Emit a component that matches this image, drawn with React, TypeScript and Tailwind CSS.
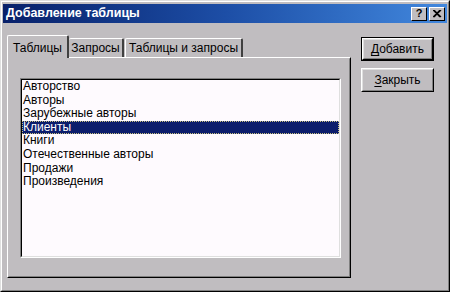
import React from "react";

const items = [
  "Авторство",
  "Авторы",
  "Зарубежные авторы",
  "Клиенты",
  "Книги",
  "Отечественные авторы",
  "Продажи",
  "Произведения",
];

const TitleButton: React.FC<{ children: React.ReactNode }> = ({ children }) => (
  <div className="w-[16px] h-[14px] bg-[#c0bdc0] border border-t-white border-l-white border-r-black border-b-black flex items-center justify-center text-black text-[11px] font-bold leading-none">
    {children}
  </div>
);

const DialogButton: React.FC<{ label: string; hot: string; isDefault?: boolean }> = ({ label, hot, isDefault }) => (
  <div className={`w-[73px] h-[24px] ${isDefault ? "border border-black" : ""}`}>
    <div className="w-full h-full border border-t-white border-l-white border-r-black border-b-black">
      <div className="w-full h-full border border-t-[#dfdfdf] border-l-[#dfdfdf] border-r-[#808080] border-b-[#808080] flex items-center justify-center text-[12px] text-black">
        <span className="underline underline-offset-2">{hot}</span>
        {label.slice(hot.length)}
      </div>
    </div>
  </div>
);

export default function App() {
  return (
    <div className="w-[450px] h-[292px] bg-[#c0bdc0] border border-t-[#dfdfdf] border-l-[#dfdfdf] border-r-black border-b-black font-['Liberation_Sans',sans-serif]">
      <div className="w-full h-full border border-t-white border-l-white border-r-[#808080] border-b-[#808080] p-[1px] pt-[2px]">
        <div className="h-[19px] bg-gradient-to-r from-[#08206a] via-[#1d4ea6] to-[#4288de] flex items-center justify-between pl-[3px] pr-[2px]">
          <span className="text-white font-bold text-[12.5px]">Добавление таблицы</span>
          <div className="flex gap-[2px]">
            <TitleButton>?</TitleButton>
            <TitleButton>
              <svg width="9" height="8" viewBox="0 0 9 8">
                <path d="M1 0 L8 7 M0 0 L7 7 M8 0 L1 7 M7 0 L0 7" stroke="black" strokeWidth="1.2" />
              </svg>
            </TitleButton>
          </div>
        </div>

        <div className="flex pl-[4px] pt-[12px] gap-[10px]">
          <div className="w-[344px]">
            <div className="flex items-end h-[22px] text-[12px] text-black">
              <div className="relative z-10 h-[23px] -mb-[1px] w-[62px] bg-[#c0bdc0] border-l border-t border-white border-r-2 border-r-[#404040] rounded-t-[2px] flex items-start pt-[3px] justify-center">
                Таблицы
              </div>
              <div className="h-[19px] w-[55px] border-t border-white border-r-2 border-r-[#404040] rounded-t-[2px] flex items-center justify-center">
                Запросы
              </div>
              <div className="h-[19px] w-[118px] ml-[1px] border-l border-t border-white border-r-2 border-r-[#404040] rounded-t-[2px] flex items-center justify-center">
                Таблицы и запросы
              </div>
            </div>
            <div className="h-[221px] border border-t-white border-l-white border-r-black border-b-black">
              <div className="w-full h-full border border-t-transparent border-l-transparent border-r-[#808080] border-b-[#808080] pl-[11px] pt-[19px]">
                <div className="w-[321px] h-[180px] border border-t-[#808080] border-l-[#808080] border-r-white border-b-white">
                  <div className="w-full h-full border border-t-black border-l-black border-r-[#dfdfdf] border-b-[#dfdfdf] bg-[#fefafe] text-[12px] text-black">
                    {items.map((it) => (
                      <div
                        key={it}
                        className={`h-[13.6px] leading-[13.6px] pl-[1px] ${it === "Клиенты" ? "bg-[#0c1d6c] text-white outline outline-1 outline-dotted outline-offset-[-1px] outline-[#c8c080]" : ""}`}
                      >
                        {it}
                      </div>
                    ))}
                  </div>
                </div>
              </div>
            </div>
          </div>

          <div className="flex flex-col gap-[7px] pt-[2px]">
            <DialogButton label="Добавить" hot="Д" isDefault />
            <DialogButton label="Закрыть" hot="З" />
          </div>
        </div>
      </div>
    </div>
  );
}
